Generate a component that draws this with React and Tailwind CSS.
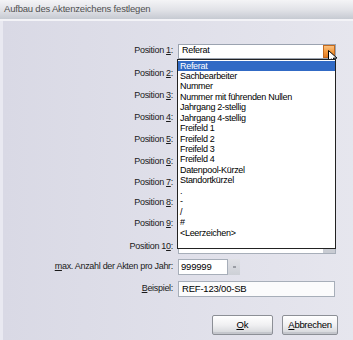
import React from "react";

const font = { fontFamily: '"Liberation Sans", Arial, sans-serif' };

const items = [
  "Referat",
  "Sachbearbeiter",
  "Nummer",
  "Nummer mit führenden Nullen",
  "Jahrgang 2-stellig",
  "Jahrgang 4-stellig",
  "Freifeld 1",
  "Freifeld 2",
  "Freifeld 3",
  "Freifeld 4",
  "Datenpool-Kürzel",
  "Standortkürzel",
  ".",
  "-",
  "/",
  "#",
  "<Leerzeichen>",
];

const rows = [
  { n: "1", h: "h-[22px]" },
  { n: "2", h: "h-[23px]" },
  { n: "3", h: "h-[22px]" },
  { n: "4", h: "h-[22px]" },
  { n: "5", h: "h-[22px]" },
  { n: "6", h: "h-[21px]" },
  { n: "7", h: "h-[21px]" },
  { n: "8", h: "h-[20px]" },
  { n: "9", h: "h-[22px]" },
  { n: "10", h: "h-[23px]" },
];

function Label({ children }) {
  return <div className="w-[170px] shrink-0 text-right text-[9px] tracking-[-0.3px] text-[#1a1a1a]">{children}</div>;
}

function PosLabel({ n }) {
  if (n === "10") {
    return (
      <Label>
        Position 1<span className="underline">0</span>:
      </Label>
    );
  }
  return (
    <Label>
      Position <span className="underline">{n}</span>:
    </Label>
  );
}

function Cursor() {
  return (
    <svg className="pointer-events-none absolute left-[4px] top-[4px]" width="11" height="15" viewBox="0 0 11 15">
      <path d="M0.5 0.5 L0.5 11.5 L3.3 8.8 L5.3 13.3 L7.2 12.4 L5.3 8.1 L9 8.1 Z" fill="#fff" stroke="#000" strokeWidth="1" />
    </svg>
  );
}

function OpenCombo() {
  return (
    <div className="relative ml-[5px] flex h-[15px] w-[158px] items-center border border-[#9ba3b0] bg-white">
      <span className="pl-[3px] text-[9px] tracking-[-0.3px] text-black">Referat</span>
      <div className="relative ml-auto h-[13px] w-[12px] border border-[#c46a1e] bg-gradient-to-b from-[#fbc27f] via-[#f39a3e] to-[#e27a1f]">
        <Cursor />
      </div>
      {/* dropdown list */}
      <div className="absolute left-[-2px] top-[14px] z-10 h-[190px] w-[159px] border border-[#222] bg-white pt-[1px]">
        {items.map((it, i) => (
          <div
            key={i}
            className={
              "h-[10.45px] pl-[2px] text-[9px] leading-[10.45px] tracking-[-0.3px] whitespace-pre " +
              (i === 0 ? "bg-[#316ac5] text-white" : "text-black")
            }
          >
            {it}
          </div>
        ))}
      </div>
    </div>
  );
}

function ClosedCombo() {
  return (
    <div className="ml-[5px] flex h-[15px] w-[158px] items-center justify-end border border-[#a7aeb9] bg-white">
      <div className="h-[13px] w-[12px] bg-[#c9ccd3]" />
    </div>
  );
}

export default function App() {
  return (
    <div className="flex h-[340px] w-[353px] flex-col overflow-hidden bg-[#dedee8]" style={font}>
      {/* title bar */}
      <div className="flex h-[19px] shrink-0 items-center bg-gradient-to-b from-[#f4f4f6] via-[#e2e3e8] to-[#c6cad2] pl-[4px] text-[9.5px] tracking-[-0.2px] text-[#505050]">
        Aufbau des Aktenzeichens festlegen
      </div>
      <div className="h-[2px] shrink-0 bg-[#f3f3f7]" />

      <div className="flex flex-1 flex-col border-l-[3px] border-[#e9e9f1] bg-gradient-to-r from-[#d9d9e5] to-[#e6e6ee] pt-[19px]">
        {rows.map((r) => (
          <div key={r.n} className={"flex items-center " + r.h}>
            <PosLabel n={r.n} />
            {r.n === "1" ? <OpenCombo /> : <ClosedCombo />}
          </div>
        ))}

        <div className="flex h-[18px] items-center">
          <Label>
            <span className="underline">m</span>ax. Anzahl der Akten pro Jahr:
          </Label>
          <div className="ml-[5px] flex h-[16px] items-stretch">
            <div className="flex w-[50px] items-center border border-[#a7aeb9] bg-white pl-[2px] text-[9.5px] tracking-[-0.2px] text-black">
              999999
            </div>
            <div className="flex w-[12px] items-center justify-center bg-gradient-to-b from-[#e0e1e6] to-[#cdd0d6]">
              <div className="h-[2px] w-[3px] bg-[#9a9da4]" />
            </div>
          </div>
        </div>

        <div className="mt-[5px] flex h-[16px] items-center">
          <Label>
            <span className="underline">B</span>eispiel:
          </Label>
          <div className="ml-[5px] flex h-[16px] w-[157px] items-center border border-[#a7aeb9] bg-[#fbfbfc] pl-[3px] text-[9.5px] tracking-[-0.2px] text-black">
            REF-123/00-SB
          </div>
        </div>

        <div className="mt-[18px] flex justify-end gap-[9px] pr-[15px]">
          <button className="flex h-[20px] w-[61px] items-center justify-center rounded-[2px] border border-[#8c8f96] bg-gradient-to-b from-[#ffffff] via-[#f0f0f2] to-[#d2d4d8] text-[9.5px] text-black shadow-[inset_0_-2px_0_#c4c6cc]">
            <span>
              <span className="underline">O</span>k
            </span>
          </button>
          <button className="flex h-[20px] w-[56px] items-center justify-center rounded-[2px] border border-[#8c8f96] bg-gradient-to-b from-[#ffffff] via-[#f0f0f2] to-[#d2d4d8] text-[9.5px] tracking-[-0.3px] text-black shadow-[inset_0_-2px_0_#c4c6cc]">
            <span>
              <span className="underline">A</span>bbrechen
            </span>
          </button>
        </div>
      </div>
    </div>
  );
}
